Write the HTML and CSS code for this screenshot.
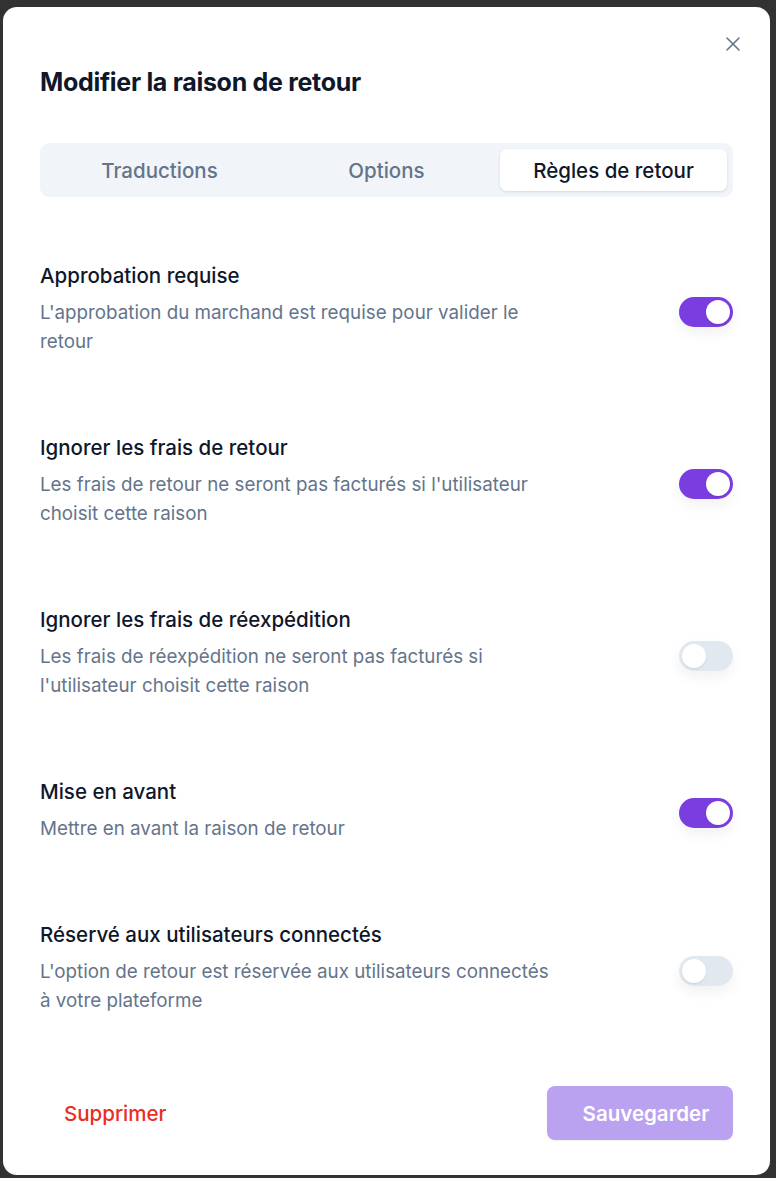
FILE: index.html
```html
<!DOCTYPE html>
<html lang="fr">
<head>
<meta charset="utf-8">
<title>Modifier la raison de retour</title>
<link rel="stylesheet" href="styles.css">
</head>
<body>
<div class="modal">
  <button class="close" aria-label="Fermer">
    <svg width="16" height="16" viewBox="0 0 16 16"><path d="M2 2 L14 14 M14 2 L2 14" stroke="#64748b" stroke-width="1.6" stroke-linecap="round" fill="none"/></svg>
  </button>
  <h1 class="title">Modifier la raison de retour</h1>
  <div class="tabs">
    <div class="tab">Traductions</div>
    <div class="tab">Options</div>
    <div class="tab active">Règles de retour</div>
  </div>
  <div class="rules">
    <div class="rule">
      <div class="rule-text">
        <div class="rule-title">Approbation requise</div>
        <div class="rule-desc">L'approbation du marchand est requise pour valider le retour</div>
      </div>
      <span class="toggle on"><span class="knob"></span></span>
    </div>
    <div class="rule">
      <div class="rule-text">
        <div class="rule-title">Ignorer les frais de retour</div>
        <div class="rule-desc">Les frais de retour ne seront pas facturés si l'utilisateur choisit cette raison</div>
      </div>
      <span class="toggle on"><span class="knob"></span></span>
    </div>
    <div class="rule">
      <div class="rule-text">
        <div class="rule-title">Ignorer les frais de réexpédition</div>
        <div class="rule-desc">Les frais de réexpédition ne seront pas facturés si l'utilisateur choisit cette raison</div>
      </div>
      <span class="toggle"><span class="knob"></span></span>
    </div>
    <div class="rule">
      <div class="rule-text">
        <div class="rule-title">Mise en avant</div>
        <div class="rule-desc">Mettre en avant la raison de retour</div>
      </div>
      <span class="toggle on"><span class="knob"></span></span>
    </div>
    <div class="rule">
      <div class="rule-text">
        <div class="rule-title">Réservé aux utilisateurs connectés</div>
        <div class="rule-desc">L'option de retour est réservée aux utilisateurs connectés à votre plateforme</div>
      </div>
      <span class="toggle"><span class="knob"></span></span>
    </div>
  </div>
  <div class="footer">
    <button class="delete">Supprimer</button>
    <button class="save" disabled>Sauvegarder</button>
  </div>
</div>
</body>
</html>
```

FILE: styles.css
```css
* { box-sizing: border-box; }
html, body { margin: 0; height: 100%; }
body {
  background: #323232;
  font-family: Inter, "Noto Sans", sans-serif;
  padding: 7px 6px 3px 3px;
}
.modal {
  position: relative;
  width: 767px;
  height: 1168px;
  background: #fff;
  border-radius: 14px;
  padding: 59px 37px 35px 37px;
  display: flex;
  flex-direction: column;
}
.close {
  position: absolute;
  top: 29px;
  right: 29px;
  width: 16px;
  height: 16px;
  padding: 0;
  border: 0;
  background: none;
  display: flex;
}
.title {
  margin: 0;
  font-size: 25px;
  line-height: 32px;
  font-weight: 700;
  color: #0f172a;
  letter-spacing: -0.3px;
}
.tabs {
  margin-top: 45px;
  background: #f1f5f9;
  border-radius: 9px;
  padding: 6px;
  display: grid;
  grid-template-columns: 1fr 1fr 1fr;
}
.tab {
  height: 42px;
  display: flex;
  align-items: center;
  justify-content: center;
  font-size: 20.5px;
  font-weight: 500;
  color: #64748b;
  border-radius: 7px;
}
.tab.active {
  background: #fff;
  color: #0f172a;
  box-shadow: 0 1px 3px rgba(15, 23, 42, 0.12);
}
.rules {
  margin-top: 65px;
  display: flex;
  flex-direction: column;
  gap: 78px;
}
.rule {
  display: flex;
  align-items: center;
  justify-content: space-between;
}
.rule-text { width: 515px; }
.rule-title {
  font-size: 20.5px;
  line-height: 28px;
  font-weight: 500;
  color: #0f172a;
}
.rule-desc {
  margin-top: 8px;
  font-size: 18.8px;
  line-height: 29px;
  color: #64748b;
}
.toggle {
  width: 54px;
  height: 30px;
  margin-top: 5px;
  border-radius: 15px;
  background: #e2e8f0;
  padding: 3px;
  display: flex;
  justify-content: flex-start;
  box-shadow: 0 6px 14px rgba(15, 23, 42, 0.06);
  flex: none;
}
.toggle.on {
  background: #7a3de0;
  justify-content: flex-end;
}
.knob {
  width: 24px;
  height: 24px;
  border-radius: 50%;
  background: #fff;
  box-shadow: 0 1px 2px rgba(0, 0, 0, 0.1);
}
.footer {
  margin-top: auto;
  display: flex;
  justify-content: space-between;
  align-items: center;
}
.delete {
  border: 0;
  background: none;
  padding: 0 24px;
  height: 54px;
  font-family: inherit;
  font-size: 20.5px;
  font-weight: 500;
  color: #ea2e1f;
}
.save {
  border: 0;
  background: #bba2f0;
  color: #fff;
  width: 186px;
  height: 54px;
  padding: 0 0 0 12px;
  border-radius: 8px;
  font-family: inherit;
  font-size: 20.5px;
  font-weight: 600;
  box-shadow: 0 1px 2px rgba(0, 0, 0, 0.05);
}
```
